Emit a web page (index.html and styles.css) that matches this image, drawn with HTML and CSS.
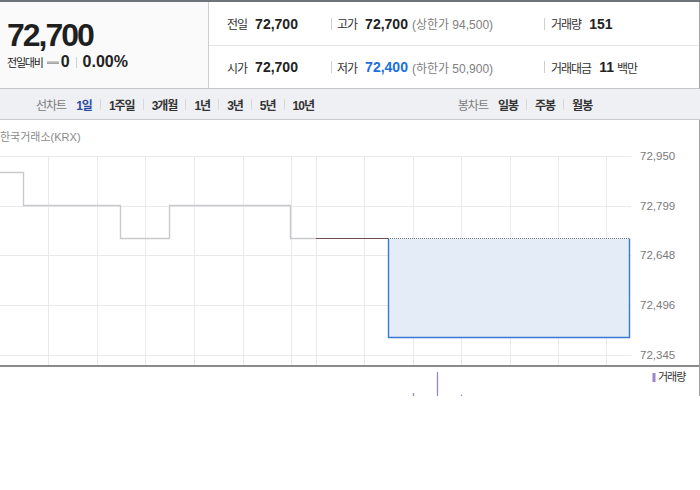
FILE: index.html
```html
<!DOCTYPE html>
<html lang="ko">

<head>
    <meta charset="UTF-8">
    <meta name="viewport" content="width=device-width, initial-scale=1.0">
    <title>시세 차트</title>
    <link rel="stylesheet" href="styles.css">
</head>

<body>
    <div class="top-line"></div>

    <div class="quote">
        <div class="quote-now">
            <div class="quote-price">72,700</div>
            <div class="quote-change">
                <span class="change-label">전일대비</span>
                <span class="flat-icon"></span>
                <b>0</b>
                <span class="change-sep"></span>
                <b>0.00%</b>
            </div>
        </div>
        <div class="quote-stats">
            <div class="stats-row">
                <div class="stats-cell col1"><span class="key">전일</span><b>72,700</b></div>
                <div class="stats-cell col2"><span class="key">고가</span><b>72,700</b><span class="limit">(상한가 94,500)</span></div>
                <div class="stats-cell col3"><span class="key">거래량</span><b>151</b></div>
            </div>
            <div class="stats-row">
                <div class="stats-cell col1"><span class="key">시가</span><b>72,700</b></div>
                <div class="stats-cell col2"><span class="key">저가</span><b class="down">72,400</b><span class="limit">(하한가 50,900)</span></div>
                <div class="stats-cell col3"><span class="key">거래대금</span><b>11</b><span class="unit">백만</span></div>
            </div>
        </div>
    </div>

    <div class="chart-tabs">
        <div class="tab-group">
            <span class="tab-title">선차트</span>
            <a class="tab active">1일</a><i class="tab-sep"></i>
            <a class="tab">1주일</a><i class="tab-sep"></i>
            <a class="tab">3개월</a><i class="tab-sep"></i>
            <a class="tab">1년</a><i class="tab-sep"></i>
            <a class="tab">3년</a><i class="tab-sep"></i>
            <a class="tab">5년</a><i class="tab-sep"></i>
            <a class="tab">10년</a>
        </div>
        <div class="tab-group">
            <span class="tab-title">봉차트</span>
            <a class="tab">일봉</a><i class="tab-sep"></i>
            <a class="tab">주봉</a><i class="tab-sep"></i>
            <a class="tab">월봉</a>
        </div>
    </div>

    <div class="chart">
        <div class="chart-source">한국거래소(KRX)</div>
        <svg class="chart-canvas" width="699" height="252" viewBox="0 0 699 252">
            <!-- grid -->
            <g stroke="#e9e9ec" stroke-width="1">
                <line x1="0" y1="12.5" x2="631" y2="12.5" />
                <line x1="0" y1="62.5" x2="631" y2="62.5" />
                <line x1="0" y1="111.5" x2="631" y2="111.5" />
                <line x1="0" y1="161.5" x2="631" y2="161.5" />
                <line x1="0" y1="211.5" x2="631" y2="211.5" />
                <line x1="48.5" y1="12" x2="48.5" y2="221" />
                <line x1="97.5" y1="12" x2="97.5" y2="221" />
                <line x1="145.5" y1="12" x2="145.5" y2="221" />
                <line x1="194.5" y1="12" x2="194.5" y2="221" />
                <line x1="243.5" y1="12" x2="243.5" y2="221" />
                <line x1="291.5" y1="12" x2="291.5" y2="221" />
                <line x1="316.5" y1="12" x2="316.5" y2="221" />
                <line x1="364.5" y1="12" x2="364.5" y2="221" />
                <line x1="413.5" y1="12" x2="413.5" y2="221" />
                <line x1="461.5" y1="12" x2="461.5" y2="221" />
                <line x1="510.5" y1="12" x2="510.5" y2="221" />
                <line x1="558.5" y1="12" x2="558.5" y2="221" />
                <line x1="606.5" y1="12" x2="606.5" y2="221" />
            </g>

            <!-- previous days -->
            <path d="M0 28.5 H23.5 V61.5 H120.5 V94.5 H169.5 V61.5 H290.5 V94.5 H316" fill="none" stroke="#c9cace" stroke-width="1.4" />
            <path d="M316 94.5 H388" fill="none" stroke="#6b4f52" stroke-width="1.2" />

            <!-- today -->
            <rect x="388.5" y="94.5" width="241" height="99" fill="#e4ecf8" />
            <path d="M388.5 94.5 V193.5 H629.5 V94.5" fill="none" stroke="#3a78d6" stroke-width="1.4" />
            <line x1="388" y1="94.5" x2="630" y2="94.5" stroke="#777" stroke-width="1" stroke-dasharray="1 1" />

            <!-- price axis -->
            <g class="axis-label">
                <text x="640" y="12.5">72,950</text>
                <text x="640" y="62.5">72,799</text>
                <text x="640" y="111.5">72,648</text>
                <text x="640" y="161.5">72,496</text>
                <text x="640" y="211.5">72,345</text>
            </g>
            <line x1="0" y1="222" x2="699" y2="222" stroke="#8a8a8a" stroke-width="2" />

            <!-- volume -->
            <rect x="652.5" y="229" width="3" height="9" fill="#9a86c8" />
            <text class="legend-label" x="658" y="234">거래량</text>
            <g stroke="#9a86c8" stroke-width="1.3">
                <line x1="413.5" y1="249" x2="413.5" y2="252" />
                <line x1="437.5" y1="228" x2="437.5" y2="252" />
                <line x1="461.5" y1="250.5" x2="461.5" y2="252" />
            </g>
        </svg>
    </div>
</body>

</html>
```

FILE: styles.css
```css
body {
    margin: 0;
    font-family: "Liberation Sans", "Noto Sans CJK KR", sans-serif;
    color: #222;
    background: #fff;
}

.top-line {
    height: 2px;
    background-color: #6f737b;
}

.quote {
    display: flex;
    width: 699px;
    height: 86px;
    border-right: 1px solid #a8a8a8;
    border-bottom: 1px solid #c4c4c4;
}

.quote-now {
    width: 201px;
    padding: 17px 0 0 7px;
    background-color: #fafafa;
    border-right: 1px solid #cfcfcf;
}

.quote-price {
    font-size: 32px;
    line-height: 32px;
    font-weight: bold;
    letter-spacing: -2px;
    color: #1f1f1f;
}

.quote-change {
    display: flex;
    align-items: center;
    height: 20px;
    margin-top: 1px;
}

.quote-change b {
    font-size: 16px;
    color: #222;
}

.change-label {
    font-size: 11px;
    letter-spacing: -1.2px;
    color: #222;
}

.flat-icon {
    width: 12px;
    height: 3px;
    margin: 1px 2px 0 4px;
    background: linear-gradient(#d4d4d4, #9a9a9a);
}

.change-sep {
    width: 1px;
    height: 11px;
    margin: 0 6px;
    background-color: #d0d0d0;
}

.quote-stats {
    flex: 1;
}

.stats-row {
    display: flex;
    height: 43px;
    border-bottom: 1px solid #e6e6e6;
}

.stats-row:last-child {
    height: 42px;
    border-bottom: none;
}

.stats-cell {
    display: flex;
    align-items: center;
}

.stats-cell b {
    font-size: 14px;
}

.col1 {
    width: 104px;
    padding-left: 18px;
}

.col2 {
    width: 213px;
}

.col3 {
    flex: 1;
}

.col2::before,
.col3::before {
    content: "";
    width: 1px;
    height: 12px;
    margin-right: 5px;
    background-color: #cfcfcf;
}

.col3::before {
    margin-right: 6px;
}

.key {
    margin-right: 8px;
    font-size: 12px;
    letter-spacing: -1px;
    color: #333;
}

.stats-cell b.down {
    color: #1b6fe0;
}

.limit {
    margin-left: 4px;
    font-size: 12px;
    color: #808080;
}

.unit {
    margin-left: 3px;
    font-size: 12px;
    letter-spacing: -1px;
    color: #333;
}

.chart-tabs {
    display: grid;
    grid-template-columns: 350px 350px;
    height: 30px;
    background-color: #eff0f4;
    border-bottom: 1px solid #c8c9cc;
}

.tab-group {
    display: flex;
    align-items: center;
    justify-content: center;
    font-size: 12px;
    letter-spacing: -1px;
}

.tab-title {
    margin-right: 10px;
    color: #7a7a7a;
}

.tab-group .tab-title + .tab {
    margin-left: 0;
}

.tab {
    font-weight: bold;
    color: #333;
}

.tab.active {
    color: #2c4aa2;
}

.tab-sep {
    width: 1px;
    height: 11px;
    margin: 0 8px;
    background-color: #d8d9dd;
}

.chart {
    width: 699px;
    height: 276px;
    border-right: 1px solid #a0a0a0;
}

.chart-source {
    padding-top: 10px;
    font-size: 11px;
    line-height: 14px;
    color: #8a8a8a;
}

.chart-canvas {
    display: block;
}

.axis-label text {
    font-size: 11.5px;
    fill: #7a7a7a;
    dominant-baseline: middle;
}

.legend-label {
    font-size: 11px;
    fill: #333;
    letter-spacing: -1px;
    dominant-baseline: middle;
}
```
